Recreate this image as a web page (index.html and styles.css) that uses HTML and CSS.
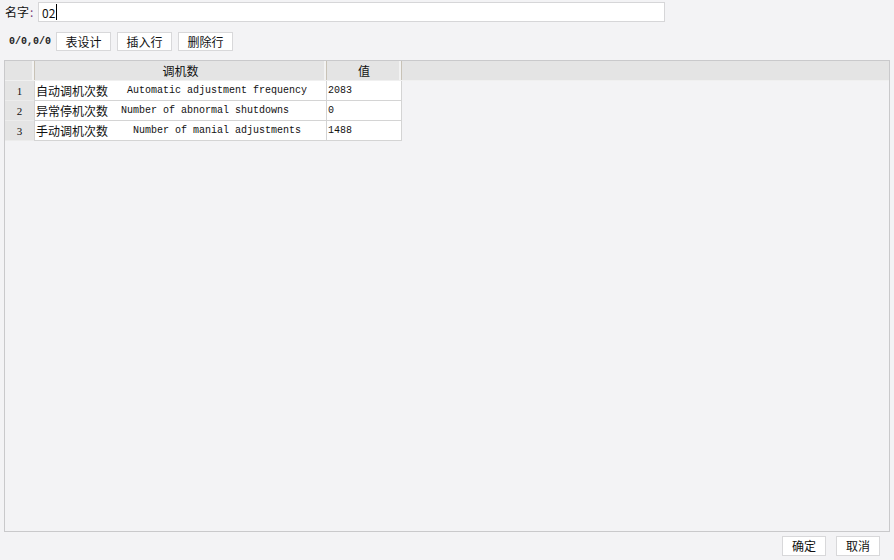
FILE: index.html
```html
<!DOCTYPE html>
<html lang="zh">
<head>
<meta charset="utf-8">
<link rel="stylesheet" href="styles.css">
</head>
<body>
<div class="name-row">
  <span class="label">名字<span class="colon">:</span></span>
  <div class="name-input"><span class="val">02</span><span class="caret"></span></div>
</div>
<div class="toolbar">
  <span class="counter">0/0,0/0</span>
  <button class="btn">表设计</button>
  <button class="btn">插入行</button>
  <button class="btn">删除行</button>
</div>
<div class="panel">
  <div class="header">
    <div class="hcell corner"></div>
    <div class="hcell c1">调机数</div>
    <div class="hcell c2">值</div>
    <div class="hrest"></div>
  </div>
  <div class="row">
    <div class="rnum">1</div>
    <div class="cell c1"><span class="zh">自动调机次数</span><span class="en g3">Automatic adjustment frequency</span></div>
    <div class="cell c2 num">2083</div>
  </div>
  <div class="row">
    <div class="rnum">2</div>
    <div class="cell c1"><span class="zh">异常停机次数</span><span class="en g2">Number of abnormal shutdowns</span></div>
    <div class="cell c2 num">0</div>
  </div>
  <div class="row">
    <div class="rnum">3</div>
    <div class="cell c1"><span class="zh">手动调机次数</span><span class="en g4">Number of manial adjustments</span></div>
    <div class="cell c2 num">1488</div>
  </div>
</div>
<div class="footer">
  <button class="btn fbtn">确定</button>
  <button class="btn fbtn">取消</button>
</div>
</body>
</html>
```
FILE: styles.css
```css
html, body {
  margin: 0;
  padding: 0;
}
body {
  background: #f3f3f5;
  font-family: "Noto Sans CJK SC", "Noto Sans", sans-serif;
  font-size: 12px;
  color: #111;
  width: 894px;
  height: 560px;
  overflow: hidden;
}
.name-row {
  display: flex;
  align-items: center;
  height: 20px;
  padding-top: 2px;
  padding-left: 5px;
}
.label {
  width: 33px;
  line-height: 20px;
}
.colon {
  color: #7a3e7a;
  margin-left: 1px;
}
.name-input {
  box-sizing: border-box;
  width: 627px;
  height: 20px;
  background: #fff;
  border: 1px solid #d6d6d8;
  display: flex;
  align-items: center;
  padding-left: 3px;
  font-size: 12px;
}
.caret {
  display: inline-block;
  width: 1px;
  height: 16px;
  background: #000;
  margin-left: 1px;
}
.toolbar {
  display: flex;
  align-items: center;
  margin-top: 10px;
  padding-left: 9px;
  height: 19px;
}
.counter {
  font-family: "Liberation Mono", monospace;
  font-size: 10px;
  font-weight: bold;
  color: #222;
  width: 47px;
}
.btn {
  box-sizing: border-box;
  height: 19px;
  width: 55px;
  padding: 0;
  margin: 0 6px 0 0;
  background: #fff;
  border: 1px solid #d8d8da;
  border-radius: 0;
  font-family: "Noto Sans CJK SC", sans-serif;
  font-size: 12px;
  color: #111;
  line-height: 17px;
}
.panel {
  box-sizing: border-box;
  margin: 9px 4px 0 4px;
  height: 472px;
  border: 1px solid #c9c9cb;
}
.header {
  display: flex;
  height: 19px;
  background: #e4e4e4;
  border-bottom: 1px solid #f0f0f0;
}
.hcell {
  box-sizing: border-box;
  height: 19px;
  line-height: 19px;
  text-align: center;
  border-right: 1px solid #c8c2b6;
  box-shadow: inset -2px 0 0 #ffffff80;
}
.hcell.corner { width: 30px; }
.hcell.c1 { width: 292px; }
.hcell.c2 { width: 75px; }
.hrest { flex: 1; }
.row {
  display: flex;
  height: 20px;
}
.rnum {
  box-sizing: border-box;
  width: 29px;
  background: #e4e4e4;
  font-family: "Liberation Serif", serif;
  font-size: 11px;
  text-align: center;
  line-height: 20px;
  border-bottom: 1px solid #ececec;
}
.cell {
  box-sizing: border-box;
  background: #fff;
  border-right: 1px solid #d4d4d4;
  border-bottom: 1px solid #d4d4d4;
  height: 20px;
  display: flex;
  align-items: center;
  padding-left: 1px;
  white-space: nowrap;
}
.cell.c1 { width: 293px; border-left: 1px solid #d4d4d4; }
.cell.c2 { width: 75px; }
.zh { font-size: 12px; }
.en {
  font-family: "Liberation Mono", monospace;
  font-size: 10px;
  color: #111;
}
.en.g3 { margin-left: 19px; }
.en.g2 { margin-left: 13px; }
.en.g4 { margin-left: 25px; }
.num {
  font-family: "Liberation Mono", monospace;
  font-size: 10px;
}
.footer {
  display: flex;
  justify-content: flex-end;
  margin-top: 4px;
  padding-right: 14px;
}
.fbtn {
  width: 44px;
  height: 20px;
  line-height: 18px;
  margin: 0 0 0 10px;
}
```
